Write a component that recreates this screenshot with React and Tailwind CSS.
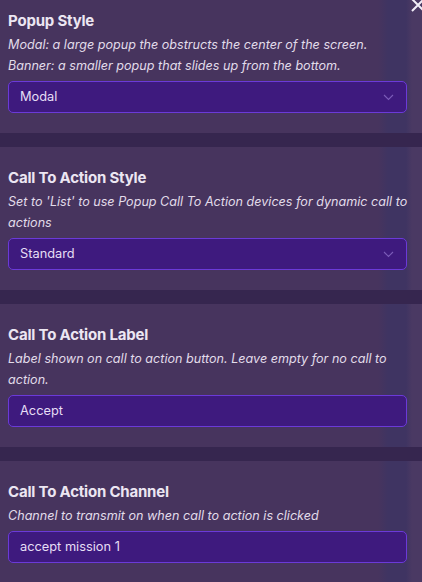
import React from "react";

const sections = [
  {
    title: "Popup Style",
    desc: "Modal: a large popup the obstructs the center of the screen. Banner: a smaller popup that slides up from the bottom.",
    value: "Modal",
    select: true,
    first: true,
  },
  {
    title: "Call To Action Style",
    desc: "Set to 'List' to use Popup Call To Action devices for dynamic call to actions",
    value: "Standard",
    select: true,
  },
  {
    title: "Call To Action Label",
    desc: "Label shown on call to action button. Leave empty for no call to action.",
    value: "Accept",
  },
  {
    title: "Call To Action Channel",
    desc: "Channel to transmit on when call to action is clicked",
    value: "accept mission 1",
  },
];

function Chevron() {
  return (
    <svg width="11" height="7" viewBox="0 0 11 7" fill="none" className="shrink-0">
      <path d="M1 1l4.5 4.5L10 1" stroke="#7b5cb8" strokeWidth="1.1" />
    </svg>
  );
}

function Field({ s }) {
  return (
    <div className={`px-2 pb-5 ${s.first ? "pt-[10px]" : "pt-5"}`}>
      <div className="text-[15px] leading-[22px] font-bold text-[#ece6f2] tracking-[-0.2px]">{s.title}</div>
      <div className="mt-0.5 text-[12.6px] leading-[21px] italic text-[#e2dcea]">{s.desc}</div>
      <div className="mt-[5px] h-8 w-[399px] flex items-center justify-between pl-[11px] pr-[12px] rounded-[5px] border border-[#6b3ad8] bg-[#3e1a7e] text-[12.8px] text-[#e6def5]">
        <span>{s.value}</span>
        {s.select && <Chevron />}
      </div>
    </div>
  );
}

export default function App() {
  return (
    <div
      className="relative w-[422px] h-[582px] overflow-hidden font-['Inter','Liberation_Sans',sans-serif] bg-[linear-gradient(to_right,#47345e_0,#47345e_378px,#3f3462_388px,#3f3462_406px,#4a3963_412px)]"
    >
      {sections.map((s, i) => (
        <div key={s.title}>
          {i > 0 && <div className="h-[14px] bg-[#36264f]" />}
          <Field s={s} />
        </div>
      ))}
      <svg className="absolute right-[-4px] top-[-3px]" width="16" height="16" viewBox="0 0 16 16" fill="none">
        <path d="M2 2l12 12M14 2L2 14" stroke="#f2eef8" strokeWidth="2" />
      </svg>
    </div>
  );
}
